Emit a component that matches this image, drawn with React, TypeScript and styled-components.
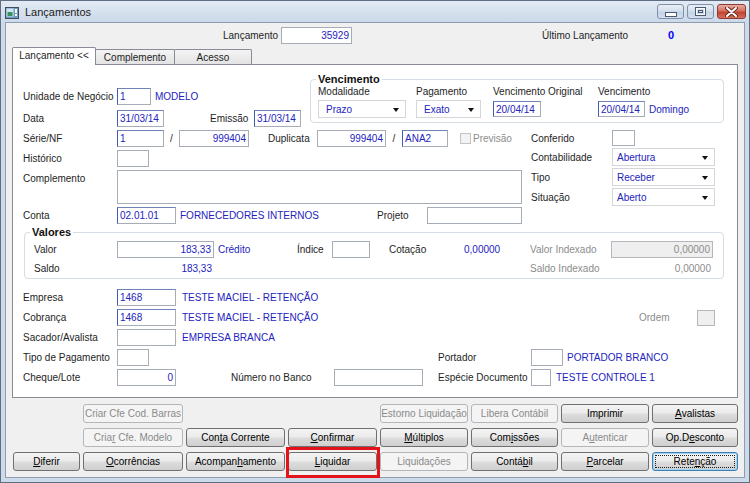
import React from 'react';
import styled, { createGlobalStyle } from 'styled-components';

const GlobalStyle = createGlobalStyle`
  html, body { margin: 0; padding: 0; background: #ffffff; }
  body { font-family: "Liberation Sans", Arial, sans-serif; font-size: 10px; color: #1e1e1e; }
  * { box-sizing: border-box; }
`;

const Colors = {
  text: '#1e1e1e',
  blue: '#2323c0',
  muted: '#8c8c8c',
  face: '#f0f0f0',
  edge: '#898c95',
};

const Window = styled.div`
  width: 750px;
  height: 483px;
  display: flex;
  flex-direction: column;
  background: #cddaea;
  border: 1px solid #5f6e82;
  overflow: hidden;
`;

const TitleBar = styled.div`
  height: 21px;
  flex-shrink: 0;
  display: flex;
  align-items: flex-start;
  padding: 0 3px 0 4px;
  background: linear-gradient(#e2eaf4, #ccd9e9);
`;

const TitleText = styled.span`
  margin: 5px 0 0 6px;
  font-size: 11px;
  color: #1b1b1b;
`;

const Captions = styled.div`
  margin: 3px 0 0 auto;
  display: flex;
  gap: 3px;
`;

const CaptionButton = styled.div<{ $close?: boolean }>`
  width: ${p => (p.$close ? 29 : 27)}px;
  height: 15px;
  border: 1px solid ${p => (p.$close ? '#8d3b33' : '#7f90a7')};
  border-radius: 3px;
  display: flex;
  align-items: center;
  justify-content: center;
  background: ${p =>
    p.$close
      ? 'linear-gradient(#e9ab9f 0%, #d47264 45%, #c2432f 55%, #d3705a 100%)'
      : 'linear-gradient(#e8eef6 0%, #d5e0ee 45%, #c4d3e6 55%, #d3dff0 100%)'};
`;

const Body = styled.div`
  flex: 1;
  margin: 0 4px 4px 4px;
  background: ${Colors.face};
  border: 1px solid #8e9db1;
  display: flex;
  flex-direction: column;
`;

const TopBar = styled.div`
  height: 24px;
  display: flex;
  align-items: center;
  padding-left: 217px;
`;

const TabStrip = styled.div`
  height: 17px;
  margin-left: 7px;
  display: flex;
  align-items: flex-end;
  position: relative;
  z-index: 1;
`;

const Tab = styled.div<{ $w: number; $active?: boolean }>`
  width: ${p => p.$w}px;
  height: ${p => (p.$active ? 18 : 15)}px;
  margin-bottom: ${p => (p.$active ? -1 : 0)}px;
  margin-left: -1px;
  border: 1px solid ${Colors.edge};
  border-bottom: none;
  border-radius: 2px 2px 0 0;
  background: ${p => (p.$active ? '#ffffff' : 'linear-gradient(#f4f4f4, #e3e3e3)')};
  display: flex;
  align-items: center;
  justify-content: center;
  font-size: 10px;
  padding-bottom: ${p => (p.$active ? 2 : 0)}px;
`;

const Panel = styled.div`
  margin-left: 6px;
  width: 726px;
  height: 334px;
  border: 1px solid ${Colors.edge};
  background: #ffffff;
  padding: 8px 12px 0 10px;
`;

const TopSection = styled.div`
  display: flex;
  height: 54px;
  margin-bottom: 3px;
`;

const Stack = styled.div<{ $w: number; $gap: number; $pt?: number }>`
  width: ${p => p.$w}px;
  flex-shrink: 0;
  display: flex;
  flex-direction: column;
  gap: ${p => p.$gap}px;
  padding-top: ${p => p.$pt ?? 0}px;
`;

const Row = styled.div<{ $h?: number; $top?: boolean }>`
  height: ${p => p.$h ?? 17}px;
  display: flex;
  align-items: ${p => (p.$top ? 'flex-start' : 'center')};
  white-space: nowrap;
`;

const Label = styled.span<{ $w?: number; $ml?: number; $muted?: boolean; $pt?: number }>`
  width: ${p => (p.$w ? `${p.$w}px` : 'auto')};
  margin-left: ${p => p.$ml ?? 0}px;
  padding-top: ${p => p.$pt ?? 0}px;
  flex-shrink: 0;
  color: ${p => (p.$muted ? Colors.muted : Colors.text)};
`;

const Info = styled.span<{ $ml?: number; $bold?: boolean; $bright?: boolean }>`
  margin-left: ${p => p.$ml ?? 0}px;
  color: ${p => (p.$bright ? '#0000ff' : Colors.blue)};
  font-weight: ${p => (p.$bold ? 'bold' : 'normal')};
  font-size: ${p => (p.$bold ? 11 : 10)}px;
`;

const Edit = styled.div<{ $w: number; $h?: number; $right?: boolean; $accent?: boolean; $off?: boolean }>`
  width: ${p => p.$w}px;
  height: ${p => p.$h ?? 17}px;
  flex-shrink: 0;
  border: 1px solid ${p => (p.$off ? '#b4b8bd' : '#a7adb6')};
  border-left-color: ${p => (p.$accent ? '#3f5db6' : p.$off ? '#b4b8bd' : '#a7adb6')};
  border-top-color: ${p => (p.$accent ? '#6f83b8' : p.$off ? '#b4b8bd' : '#a7adb6')};
  background: ${p => (p.$off ? '#efefef' : '#ffffff')};
  color: ${p => (p.$off ? Colors.muted : Colors.blue)};
  padding: 0 2px;
  display: flex;
  align-items: center;
  justify-content: ${p => (p.$right ? 'flex-end' : 'flex-start')};
  overflow: hidden;
`;

const Combo = styled.div<{ $w: number; $pl: number }>`
  width: ${p => p.$w}px;
  height: 18px;
  flex-shrink: 0;
  border: 1px solid #d4d6da;
  background: #ffffff;
  color: ${Colors.blue};
  padding-left: ${p => p.$pl}px;
  display: flex;
  align-items: center;
`;

const Arrow = styled.span`
  margin: 1px 6px 0 auto;
  width: 0;
  height: 0;
  border-left: 3.5px solid transparent;
  border-right: 3.5px solid transparent;
  border-top: 4px solid #111;
`;

const Slash = styled.span<{ $w: number }>`
  width: ${p => p.$w}px;
  flex-shrink: 0;
  text-align: center;
`;

const Check = styled.span`
  width: 11px;
  height: 11px;
  margin: 0 2px 0 12px;
  border: 1px solid #c2c4c8;
  background: #f3f3f3;
  flex-shrink: 0;
`;

const Group = styled.fieldset<{ $w: number; $pl: number; $mt?: number; $ml?: number }>`
  width: ${p => p.$w}px;
  margin: ${p => p.$mt ?? 0}px 0 0 ${p => p.$ml ?? 0}px;
  padding: 0 4px 4px ${p => p.$pl}px;
  border: 1px solid #d5dce3;
  border-radius: 4px;
  min-inline-size: 0;
  align-self: flex-start;
`;

const Legend = styled.legend<{ $ml: number }>`
  font-size: 11px;
  line-height: 12px;
  font-weight: bold;
  color: #111;
  padding: 0 2px;
  margin-left: ${p => p.$ml}px;
`;

const DueGrid = styled.div`
  display: grid;
  grid-template-columns: 98px 77px 105px 1fr;
  grid-template-rows: 12px 18px;
  row-gap: 3px;
  align-items: center;
  white-space: nowrap;
`;

const ValuesGrid = styled.div`
  display: grid;
  grid-template-columns: 83px 97px 83px 35px 38px 19px 75px 37px 29px 81px 102px;
  grid-template-rows: 17px 17px;
  row-gap: 2px;
  padding: 3px 0 0 0;
  margin-bottom: -3px;
  align-items: center;
  white-space: nowrap;
`;

const Cell = styled.span<{ $col?: string; $right?: boolean; $muted?: boolean; $blue?: boolean; $pl?: number }>`
  grid-column: ${p => p.$col ?? 'auto'};
  text-align: ${p => (p.$right ? 'right' : 'left')};
  padding-left: ${p => p.$pl ?? 0}px;
  padding-right: ${p => (p.$right ? 2 : 0)}px;
  color: ${p => (p.$muted ? Colors.muted : p.$blue ? Colors.blue : Colors.text)};
`;

const MidSection = styled.div`
  display: flex;
  gap: 9px;
`;

const LowerSection = styled.div`
  margin-top: 10px;
  display: flex;
  flex-direction: column;
  gap: 3px;
`;

const LeftPart = styled.div`
  width: 415px;
  flex-shrink: 0;
  display: flex;
  align-items: center;
`;

const Tail = styled.div<{ $mr?: number }>`
  margin: 0 ${p => p.$mr ?? 0}px 0 auto;
  display: flex;
  align-items: center;
`;

const ButtonGrid = styled.div`
  margin: 6px 0 0 7px;
  display: grid;
  grid-template-columns: 67px 100px 99px 89px 88px 87px 88px 86px;
  grid-template-rows: 19px 19px 19px;
  column-gap: 3px;
  row-gap: 5px;
`;

const Button = styled.div<{ $off?: boolean; $focus?: boolean; $mark?: boolean; $col?: number }>`
  position: relative;
  grid-column: ${p => p.$col ?? 'auto'};
  border: 1px solid ${p => (p.$off ? '#b3b7ba' : p.$focus ? '#3c7fb1' : '#707070')};
  border-radius: 3px;
  background: ${p =>
    p.$off ? '#f4f4f4' : 'linear-gradient(#f3f3f3 0%, #ebebeb 48%, #dddddd 52%, #cfcfcf 100%)'};
  color: ${p => (p.$off ? '#8a8a8a' : '#000')};
  display: flex;
  align-items: center;
  justify-content: center;
  white-space: nowrap;
  font-size: 10px;
  box-shadow: ${p => (p.$focus ? 'inset 0 0 0 1px #9fd4f3' : 'none')};
  &::before {
    content: '';
    display: ${p => (p.$focus ? 'block' : 'none')};
    position: absolute;
    inset: 2px;
    border: 1px dotted #222;
  }
  &::after {
    content: '';
    display: ${p => (p.$mark ? 'block' : 'none')};
    position: absolute;
    left: -3px;
    top: -6px;
    right: -4px;
    bottom: -8px;
    border: 3px solid #e3131b;
  }
`;

const AppIcon = () => (
  <svg width="14" height="12" viewBox="0 0 14 12" style={{ marginTop: 6 }}>
    <rect x="0.5" y="0.5" width="13" height="11" fill="#6f9cc0" stroke="#3f4c5c" />
    <rect x="1.5" y="1.5" width="7" height="8" fill="#cfe6f2" />
    <rect x="2.5" y="5" width="5" height="4" fill="#3a8f5a" />
    <rect x="10" y="2" width="2" height="4" fill="#fff" />
    <rect x="10" y="7" width="2" height="2" fill="#fff" />
  </svg>
);

const MinGlyph = () => (
  <svg width="12" height="6" viewBox="0 0 12 6" style={{ marginTop: 4 }}>
    <rect x="0.5" y="1.5" width="11" height="4" fill="#fff" stroke="#4b5a6e" />
  </svg>
);

const MaxGlyph = () => (
  <svg width="11" height="9" viewBox="0 0 11 9">
    <rect x="0.5" y="0.5" width="10" height="8" fill="none" stroke="#4b5a6e" />
    <rect x="1.5" y="1.5" width="8" height="6" fill="none" stroke="#fff" />
    <rect x="3.5" y="3.5" width="4" height="2" fill="none" stroke="#4b5a6e" />
  </svg>
);

const CloseGlyph = () => (
  <svg width="13" height="10" viewBox="0 0 13 10">
    <path d="M2 1 L11 9 M11 1 L2 9" stroke="#6b2a22" strokeWidth="4" strokeLinecap="round" />
    <path d="M2 1 L11 9 M11 1 L2 9" stroke="#ffffff" strokeWidth="2" strokeLinecap="round" />
  </svg>
);

export default function App() {
  return (
    <>
      <GlobalStyle />
      <Window>
        <TitleBar>
          <AppIcon />
          <TitleText>Lançamentos</TitleText>
          <Captions>
            <CaptionButton><MinGlyph /></CaptionButton>
            <CaptionButton><MaxGlyph /></CaptionButton>
            <CaptionButton $close><CloseGlyph /></CaptionButton>
          </Captions>
        </TitleBar>
        <Body>
          <TopBar>
            <Label $w={58}>Lançamento</Label>
            <Edit $w={71} $right>35929</Edit>
            <Label $w={126} $ml={190}>Último Lançamento</Label>
            <Info $bold $bright>0</Info>
          </TopBar>
          <TabStrip>
            <Tab $w={84} $active>Lançamento &lt;&lt;</Tab>
            <Tab $w={80}>Complemento</Tab>
            <Tab $w={78}>Acesso</Tab>
          </TabStrip>
          <Panel>
            <TopSection>
              <Stack $w={287} $gap={5} $pt={15}>
                <Row>
                  <Label $w={94}>Unidade de Negócio</Label>
                  <Edit $w={34} $accent>1</Edit>
                  <Info $ml={4}>MODELO</Info>
                </Row>
                <Row>
                  <Label $w={94}>Data</Label>
                  <Edit $w={47} $accent>31/03/14</Edit>
                  <Label $w={44} $ml={46}>Emissão</Label>
                  <Edit $w={47} $accent>31/03/14</Edit>
                </Row>
              </Stack>
              <Group $w={414} $pl={7}>
                <Legend $ml={-2}>Vencimento</Legend>
                <DueGrid>
                  <span>Modalidade</span>
                  <span>Pagamento</span>
                  <span>Vencimento Original</span>
                  <span>Vencimento</span>
                  <Combo $w={88} $pl={7}>Prazo<Arrow /></Combo>
                  <Combo $w={65} $pl={7}>Exato<Arrow /></Combo>
                  <Edit $w={48} $h={16} $accent>20/04/14</Edit>
                  <Row $h={16}>
                    <Edit $w={47} $h={16} $accent>20/04/14</Edit>
                    <Info $ml={4}>Domingo</Info>
                  </Row>
                </DueGrid>
              </Group>
            </TopSection>

            <MidSection>
              <Stack $w={499} $gap={3}>
                <Row>
                  <Label $w={94}>Série/NF</Label>
                  <Edit $w={47} $accent>1</Edit>
                  <Slash $w={15}>/</Slash>
                  <Edit $w={70} $right>999404</Edit>
                  <Label $w={49} $ml={19}>Duplicata</Label>
                  <Edit $w={69} $right>999404</Edit>
                  <Slash $w={16}>/</Slash>
                  <Edit $w={46} $accent>ANA2</Edit>
                  <Check />
                  <Label $muted>Previsão</Label>
                </Row>
                <Row>
                  <Label $w={94}>Histórico</Label>
                  <Edit $w={32} />
                </Row>
                <Row $h={34} $top>
                  <Label $w={94} $pt={3}>Complemento</Label>
                  <Edit $w={405} $h={34} />
                </Row>
                <Row>
                  <Label $w={94}>Conta</Label>
                  <Edit $w={59} $accent>02.01.01</Edit>
                  <Info $ml={4}>FORNECEDORES INTERNOS</Info>
                  <Tail>
                    <Label $w={50}>Projeto</Label>
                    <Edit $w={95} />
                  </Tail>
                </Row>
              </Stack>
              <Stack $w={184} $gap={2}>
                <Row $h={16}>
                  <Label $w={81}>Conferido</Label>
                  <Edit $w={23} $h={16} />
                </Row>
                <Row $h={18}>
                  <Label $w={81}>Contabilidade</Label>
                  <Combo $w={103} $pl={4}>Abertura<Arrow /></Combo>
                </Row>
                <Row $h={18}>
                  <Label $w={81}>Tipo</Label>
                  <Combo $w={103} $pl={4}>Receber<Arrow /></Combo>
                </Row>
                <Row $h={18}>
                  <Label $w={81}>Situação</Label>
                  <Combo $w={103} $pl={4}>Aberto<Arrow /></Combo>
                </Row>
              </Stack>
            </MidSection>

            <Group $w={700} $pl={9} $mt={2} $ml={1}>
              <Legend $ml={-4}>Valores</Legend>
              <ValuesGrid>
                <Cell>Valor</Cell>
                <Edit $w={97} $right>183,33</Edit>
                <Cell $blue $pl={4}>Crédito</Cell>
                <Cell>Índice</Cell>
                <Edit $w={38} />
                <span />
                <Cell>Cotação</Cell>
                <Cell $blue>0,00000</Cell>
                <span />
                <Cell $muted>Valor Indexado</Cell>
                <Edit $w={102} $right $off>0,00000</Edit>
                <Cell $col="1">Saldo</Cell>
                <Cell $col="2" $right $blue>183,33</Cell>
                <Cell $col="10" $muted>Saldo Indexado</Cell>
                <Cell $col="11" $right $muted>0,00000</Cell>
              </ValuesGrid>
            </Group>

            <LowerSection>
              <Row>
                <Label $w={94}>Empresa</Label>
                <Edit $w={59} $accent>1468</Edit>
                <Info $ml={6}>TESTE MACIEL - RETENÇÃO</Info>
              </Row>
              <Row>
                <Label $w={94}>Cobrança</Label>
                <Edit $w={59} $accent>1468</Edit>
                <Info $ml={6}>TESTE MACIEL - RETENÇÃO</Info>
                <Tail $mr={10}>
                  <Label $w={58} $muted>Ordem</Label>
                  <Edit $w={18} $h={16} $off />
                </Tail>
              </Row>
              <Row>
                <Label $w={94}>Sacador/Avalista</Label>
                <Edit $w={59} />
                <Info $ml={6}>EMPRESA BRANCA</Info>
              </Row>
              <Row>
                <LeftPart>
                  <Label $w={94}>Tipo de Pagamento</Label>
                  <Edit $w={32} />
                </LeftPart>
                <Label $w={93}>Portador</Label>
                <Edit $w={32} />
                <Info $ml={4}>PORTADOR BRANCO</Info>
              </Row>
              <Row>
                <LeftPart>
                  <Label $w={94}>Cheque/Lote</Label>
                  <Edit $w={59} $right>0</Edit>
                  <Label $w={103} $ml={55}>Número no Banco</Label>
                  <Edit $w={89} />
                </LeftPart>
                <Label $w={93}>Espécie Documento</Label>
                <Edit $w={20} />
                <Info $ml={5}>TESTE CONTROLE 1</Info>
              </Row>
            </LowerSection>
          </Panel>

          <ButtonGrid>
            <Button $off $col={2}>Criar Cfe Cod. Barras</Button>
            <Button $off $col={5}>Estorno Liquidação</Button>
            <Button $off>Libera Contábil</Button>
            <Button>Imprimir</Button>
            <Button><u>A</u>valistas</Button>

            <Button $off $col={2}>Cria<u>r</u>&nbsp;Cfe. Modelo</Button>
            <Button>Con<u>t</u>a Corrente</Button>
            <Button><u>C</u>onfirmar</Button>
            <Button><u>M</u>últiplos</Button>
            <Button>Com<u>i</u>ssões</Button>
            <Button $off>A<u>u</u>tenticar</Button>
            <Button>Op.D<u>e</u>sconto</Button>

            <Button><u>D</u>iferir</Button>
            <Button><u>O</u>corrências</Button>
            <Button>Acompan<u>h</u>amento</Button>
            <Button $mark><u>L</u>iquidar</Button>
            <Button $off>Liquidações</Button>
            <Button>Contá<u>b</u>il</Button>
            <Button><u>P</u>arcelar</Button>
            <Button $focus>Rete<u>n</u>ção</Button>
          </ButtonGrid>
        </Body>
      </Window>
    </>
  );
}
